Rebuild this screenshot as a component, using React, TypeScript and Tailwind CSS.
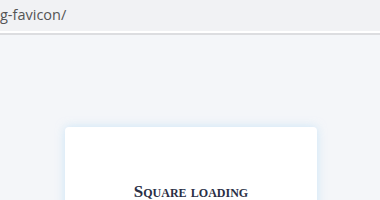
export default function App() {
  return (
    <div className="w-[380px] h-[200px] overflow-hidden bg-[#f4f6f9] flex flex-col">
      {/* address bar */}
      <div className="h-[31px] shrink-0 bg-[#f1f2f4] flex items-center">
        <span className="text-[14.5px] text-[#555] font-['Open_Sans',sans-serif] leading-none pb-[1px]">
          g-favicon/
        </span>
      </div>
      <div className="h-[2px] shrink-0 bg-white" />
      <div className="h-[2px] shrink-0 bg-[#dcdde0]" />

      <div className="flex-1 flex justify-center pt-[92px]">
        <div className="w-[252px] h-[120px] shrink-0 ml-[2px] bg-white rounded-[4px] shadow-[0_0_10px_rgba(170,215,245,0.55)] flex justify-center pt-[56px]">
          <h2 className="text-[17px] font-semibold [font-variant:small-caps] text-[#2a2f45] font-['Liberation_Serif',serif] leading-none">
            Square loading
          </h2>
        </div>
      </div>
    </div>
  );
}
